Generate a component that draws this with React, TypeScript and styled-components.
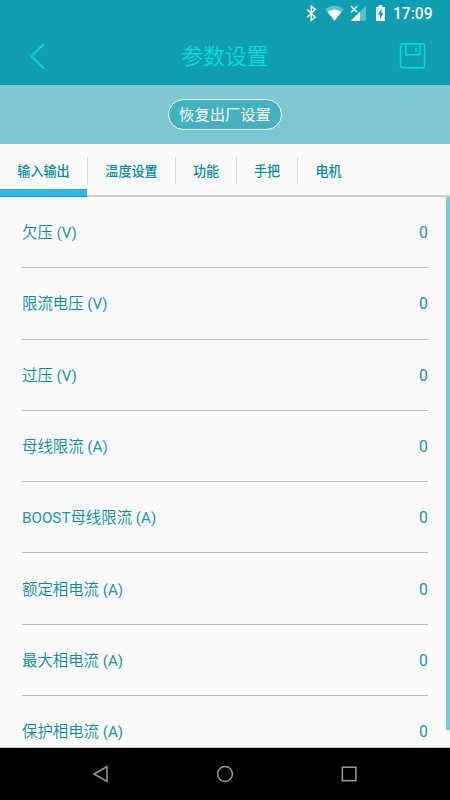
import React from "react";
import styled, { createGlobalStyle } from "styled-components";

const GlobalStyle = createGlobalStyle`
  * { box-sizing: border-box; }
  body { margin: 0; background: #fafafa; }
  button { font: inherit; border: 0; padding: 0; background: none; }
`;

const Screen = styled.div`
  width: 450px;
  height: 800px;
  display: flex;
  flex-direction: column;
  overflow: hidden;
  background: #fafafa;
  color: #078a9e;
  font-family: Roboto, "Noto Sans CJK SC", sans-serif;
`;

const Header = styled.header`
  height: 85px;
  flex: none;
  background: #109daf;
  border-bottom: 1px solid #0d95a8;
`;

const StatusBar = styled.div`
  height: 27px;
  display: flex;
  align-items: center;
  justify-content: flex-end;
  padding-right: 18px;
  color: #f4fbfc;
`;

const Clock = styled.span`
  width: 39px;
  padding-top: 2px;
  font-size: 15.6px;
  font-weight: 500;
  line-height: 27px;
  white-space: nowrap;
`;

const TitleBar = styled.div`
  height: 57px;
  display: grid;
  grid-template-columns: 76px 1fr 76px;
  align-items: center;
  justify-items: center;
  color: #00dfe0;
`;

const Title = styled.h1`
  margin: 0;
  padding-top: 2px;
  font-size: 21.8px;
  font-weight: 350;
  line-height: 32px;
`;

const IconButton = styled.button`
  display: flex;
  color: inherit;
`;

const Banner = styled.div`
  height: 59px;
  flex: none;
  display: flex;
  align-items: center;
  justify-content: center;
  background: #7ec6d1;
`;

const ResetButton = styled.button`
  && {
    width: 114px;
    height: 31px;
    border: 1.4px solid #f4fbfc;
    border-radius: 16px;
    background: #45b0c0;
    color: #f7fdfd;
    font-size: 15.3px;
    line-height: 29px;
    padding-top: 1px;
    white-space: nowrap;
  }
`;

const Tabs = styled.nav`
  height: 53px;
  flex: none;
  display: flex;
  border-bottom: 2px solid #cecece;
`;

const Tab = styled.button<{ $width: number }>`
  && {
    width: ${(p) => p.$width}px;
    height: 53px;
    display: flex;
    flex-direction: column;
    color: #078a9e;
    font-size: 13.1px;
    font-weight: 500;
  }
`;

const TabLabel = styled.span<{ $divided: boolean }>`
  width: 100%;
  height: 27px;
  margin-top: 13px;
  line-height: 29px;
  text-align: center;
  border-right: 1px solid ${(p) => (p.$divided ? "#d9d9d9" : "transparent")};
`;

const Indicator = styled.span`
  width: 87px;
  height: 8px;
  margin-top: 5px;
  background: #33b5e5;
  border-top: 1px solid #20a9dc;
  border-bottom: 1px solid #168eb8;
`;

const Content = styled.main`
  flex: 1;
  min-height: 0;
  display: flex;
  justify-content: space-between;
  overflow: hidden;
  padding-left: 22px;
  border-bottom: 1px solid #c8c8c8;
`;

const List = styled.div`
  width: 406px;
`;

const Row = styled.div`
  height: 71.3px;
  display: flex;
  align-items: center;
  justify-content: space-between;
  padding-top: 2px;
  border-bottom: 1.5px solid #bdb9bb;
  font-size: 15.4px;
  font-weight: 350;
  line-height: 24px;
  white-space: nowrap;
`;

const Latin = styled.span`
  font-size: 15.2px;
  font-weight: 400;
  color: #1d95a7;
`;

const Value = styled(Latin)`
  font-size: 15.8px;
`;

const ScrollThumb = styled.div`
  width: 4.5px;
  height: 533px;
  background: #7ecad3;
`;

const NavBar = styled.footer`
  height: 52px;
  flex: none;
  display: flex;
  align-items: center;
  justify-content: space-between;
  padding: 0 92px;
  background: #000;
  color: #9b9b9b;
`;

const NavIcon = styled.svg`
  width: 18px;
  height: 18px;
  display: block;
`;

const tabs = [
  { label: "输入输出", width: 88 },
  { label: "温度设置", width: 88 },
  { label: "功能", width: 61 },
  { label: "手把", width: 61 },
  { label: "电机", width: 62 },
];

const settings = [
  { label: "欠压", unit: "V" },
  { label: "限流电压", unit: "V" },
  { label: "过压", unit: "V" },
  { label: "母线限流", unit: "A" },
  { prefix: "BOOST", label: "母线限流", unit: "A" },
  { label: "额定相电流", unit: "A" },
  { label: "最大相电流", unit: "A" },
  { label: "保护相电流", unit: "A" },
];

function StatusIcons() {
  return (
    <svg width="88" height="27" viewBox="305 0 88 27" fill="currentColor">
      <path
        d="M307.2 9.5 L315.2 17.3 L311.3 20.3 V6.2 L315.2 9.4 L307.2 17.2"
        fill="none"
        stroke="currentColor"
        strokeWidth="1.5"
      />
      <path d="M325.2 9.2 Q334.5 1.8 343.8 9.2 L334.5 20.8 Z" opacity=".35" />
      <path d="M327.4 12 Q334.5 7 341.6 12 L334.5 20.8 Z" />
      <path d="M350.8 20.8 L366 5.8 V20.8 Z" opacity=".35" />
      <path d="M350.8 20.8 L360 11.7 V20.8 Z" />
      <path d="M350 4.5 h9 l-4.5 8.5 z" fill="#109daf" />
      <path d="M351.2 6.2 l6 6 m0 -6 l-6 6" fill="none" stroke="currentColor" strokeWidth="1.3" />
      <path d="M376 7 h2.5 V5.2 h4 V7 H385 V20.9 H376 Z" />
      <path d="M381.5 8.8 L377.9 14.6 h2.1 v4.4 l3.4 -6.1 h-2 z" fill="#109daf" />
    </svg>
  );
}

export default function App() {
  return (
    <Screen>
      <GlobalStyle />
      <Header>
        <StatusBar>
          <StatusIcons />
          <Clock>17:09</Clock>
        </StatusBar>
        <TitleBar>
          <IconButton aria-label="返回">
            <svg width="16" height="28" viewBox="0 0 16 28" fill="none" stroke="currentColor" strokeWidth="1.8">
              <path d="M14 1.8 L1.5 14.2 L14 26.6" />
            </svg>
          </IconButton>
          <Title>参数设置</Title>
          <IconButton aria-label="保存">
            <svg width="28" height="28" viewBox="0 0 28 28" fill="none" stroke="currentColor" strokeWidth="1.5">
              <rect x="2.5" y="1.8" width="24" height="24" rx="2" />
              <path d="M7.8 1.8 V12.8 H22 V1.8 M18 5.4 V9.9" />
            </svg>
          </IconButton>
        </TitleBar>
      </Header>
      <Banner>
        <ResetButton>恢复出厂设置</ResetButton>
      </Banner>
      <Tabs>
        {tabs.map((tab, i) => (
          <Tab key={tab.label} $width={tab.width}>
            <TabLabel $divided={i < tabs.length - 1}>{tab.label}</TabLabel>
            {i === 0 && <Indicator />}
          </Tab>
        ))}
      </Tabs>
      <Content>
        <List>
          {settings.map((item) => (
            <Row key={(item.prefix ?? "") + item.label}>
              <span>
                {item.prefix && <Latin>{item.prefix}</Latin>}
                {item.label}
                <Latin> ({item.unit})</Latin>
              </span>
              <Value>0</Value>
            </Row>
          ))}
        </List>
        <ScrollThumb />
      </Content>
      <NavBar>
        <NavIcon viewBox="0 0 18 18" fill="none" stroke="currentColor" strokeWidth="1.5">
          <path d="M15 1.6 V16.4 L2 9 Z" />
        </NavIcon>
        <NavIcon viewBox="0 0 18 18" fill="none" stroke="currentColor" strokeWidth="1.5">
          <circle cx="9" cy="9" r="7.4" />
        </NavIcon>
        <NavIcon viewBox="0 0 18 18" fill="none" stroke="currentColor" strokeWidth="1.5">
          <rect x="2.4" y="2.2" width="13.5" height="13.5" />
        </NavIcon>
      </NavBar>
    </Screen>
  );
}
